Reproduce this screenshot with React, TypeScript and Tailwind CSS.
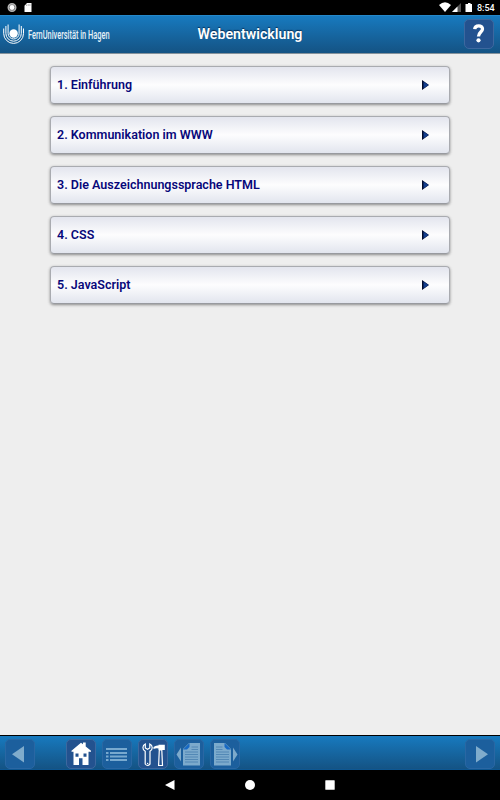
import React, { useState } from "react";

const CHAPTERS = [
  "Einführung",
  "Kommunikation im WWW",
  "Die Auszeichnungssprache HTML",
  "CSS",
  "JavaScript",
];

interface ToolButtonProps {
  label: string;
  disabled?: boolean;
  className?: string;
  onClick?: () => void;
  children: React.ReactNode;
}

const ToolButton: React.FC<ToolButtonProps> = ({ label, disabled = false, className = "", onClick, children }) => (
  <button
    aria-label={label}
    disabled={disabled}
    onClick={onClick}
    className={`h-[30px] w-[30px] shrink-0 rounded-[5px] border ${
      disabled ? "border-[#2a67a3] bg-[#1c5f9d]" : "border-[#3d689f] bg-[#23528f]"
    } ${className}`}
  >
    <svg viewBox="0 0 30 30" className="-m-px block h-[30px] w-[30px]">
      {children}
    </svg>
  </button>
);

function StatusBar() {
  return (
    <div className="flex h-[15px] items-center justify-between bg-black pr-[5px] pl-[7px]">
      <svg viewBox="0 0 30 15" className="h-[15px] w-[30px]">
        <circle cx="5" cy="7.5" r="3.8" fill="#777" stroke="#b5b5b5" strokeWidth="1.4" />
        <circle cx="5" cy="7.5" r="2.400" fill="#fff" />
        <path d="M20 3h4.500v9h-7V5.700z" fill="#fff" />
        <path d="M19.500 4.500v1.500M21.200 4v2M22.900 4v2" stroke="#999" strokeWidth=".7" />
      </svg>
      <div className="flex items-center">
        <svg viewBox="0 0 36 15" className="h-[15px] w-9">
          <path d="M0 5Q6-.5 12 5L6 12z" fill="#fff" />
          <path d="M22 3v9h-9z" fill="#555" />
          <path d="M18.500 6.500V12H13z" fill="#fff" />
          <path d="M26.500 4H29V3h2.500v1H33v8h-6.500z" fill="#fff" />
        </svg>
        <span className="ml-0.5 w-[18px] pt-px text-[9px] leading-[14px] font-medium whitespace-nowrap text-white">8:54</span>
      </div>
    </div>
  );
}

function Logo() {
  return (
    <div className="flex w-[112px] items-center pl-[3px]">
      <svg viewBox="0 0 21 21" className="h-[21px] w-[21px] shrink-0" fill="none" stroke="#fff">
        <circle cx="10.600" cy="9.500" r="4.200" fill="#fff" stroke="none" />
        <path d="M5.100 .5v9a5.500 5.500 0 0 0 11 0v-9" strokeWidth="1" />
        <path d="M2.900 2v7.500a7.700 7.700 0 0 0 15.400 0V2" strokeWidth="1" />
        <path d="M.7 4.500v5a9.900 9.900 0 0 0 19.800 0v-5" strokeWidth="1" />
      </svg>
      <span className="ml-[4px] origin-left scale-x-[0.617] text-[12px] leading-4 font-medium whitespace-nowrap text-[#e6f1f8]">
        FernUniversität in Hagen
      </span>
    </div>
  );
}

function Header() {
  return (
    <header className="flex h-[39px] items-center justify-between border-t border-b border-t-[#2588c9] border-b-[#85929b] bg-linear-to-b from-[#177abf] to-[#145384]">
      <Logo />
      <h1 className="pb-px text-[14.200px] leading-5 font-semibold text-white [text-shadow:0_-1px_1px_#062f57]">Webentwicklung</h1>
      <div className="-mt-px flex w-[112px] justify-end pr-[6px]">
        <ToolButton label="Hilfe">
          <path d="M10.700 10.200c.3-4.500 8-4.300 7.800-.2 0 3-4 3.300-4 7.500" fill="none" stroke="#fff" strokeWidth="3.300" />
          <circle cx="14.500" cy="21.300" r="2.100" fill="#fff" />
        </ToolButton>
      </div>
    </header>
  );
}

function DocumentIcon({ flip = false }: { flip?: boolean }) {
  return (
    <g transform={flip ? "translate(30 0) scale(-1 1)" : undefined}>
      <path d="M2.500 15.500 7 8.500v14z" fill="#7eaacb" />
      <path d="M15 4h11v22.500H9V10z" fill="#7caacc" />
      <path d="M9 10.500 15.500 4v4L13 10.500z" fill="#1769c4" />
      <path d="M17.500 8H24M17.500 10.500H24M11 13h13M11 15.500h13M11 18h13M11 20.500h13M11 23h13" stroke="#477fae" strokeWidth=".8" />
    </g>
  );
}

function Toolbar({ onHome }: { onHome: () => void }) {
  return (
    <footer className="flex h-[35px] items-start border-t border-b border-t-black border-b-[#0d5793] bg-linear-to-b from-[#177abf] to-[#145384] px-[5px] pt-[3px]">
      <ToolButton label="Zurück" disabled>
        <path d="M7 15.200 19 7v16.500z" fill="#80accc" />
      </ToolButton>
      <div className="ml-[30.500px] flex gap-[6px]">
        <ToolButton label="Startseite" onClick={onHome}>
          <path d="M5.500 11.700 15 3.700l2 1.500V3.500h2.700v4L25 11.700v1.100h-2.500V26h-15V12.800h-2z" fill="#fff" />
          <path d="M9.500 14.500h3v3.300h-3zM17.500 14.500h3v3.300h-3zM13 19.300h3.500V26H13z" fill="#23528f" />
        </ToolButton>
        <ToolButton label="Inhalt" disabled>
          <path d="M4 10h21M8 14h17M8 17.500h17M8 21h17M4 14h2.500M4 17.500h2.500M4 21h2.500" stroke="#78a9cf" strokeWidth="1.900" />
        </ToolButton>
        <ToolButton label="Einstellungen">
          <g transform="translate(-.7 0)">
            <path d="M8 5v4l2.200 1.300L12.500 9V5c3 1.200 3.300 5.700.2 7.200V25q-2.500 3-4.800 0V12.200C4.800 10.700 5 6.200 8 5z" fill="#23528f" stroke="#fff" strokeWidth="1.200" />
            <circle cx="10.300" cy="24.500" r=".7" fill="#fff" />
            <path d="M16.200 8q2.300-2 5-1.500v-.7h6.300V11h-6.300V9.500q-2.500-.5-5 .5z" fill="#fff" />
            <path d="M22 11h2.500l.7 15.500h-3.900z" fill="#23528f" stroke="#fff" strokeWidth="1.200" />
          </g>
        </ToolButton>
        <ToolButton label="Vorherige Seite" disabled>
          <DocumentIcon />
        </ToolButton>
        <ToolButton label="Nächste Seite" disabled>
          <DocumentIcon flip />
        </ToolButton>
      </div>
      <ToolButton label="Weiter" disabled className="ml-auto">
        <path d="M11 7v16.500l12-8.300z" fill="#80accc" />
      </ToolButton>
    </footer>
  );
}

export default function App() {
  const [chapter, setChapter] = useState<number | null>(null);

  return (
    <div className="flex h-screen flex-col bg-[#eee] font-[Roboto,sans-serif]">
      <StatusBar />
      <Header />
      <main className="flex flex-1 flex-col gap-3 px-[50px] pt-3">
        {CHAPTERS.map((title, i) => (
          <button
            key={title}
            onClick={() => setChapter(i)}
            aria-current={chapter === i}
            className="flex h-[38px] items-center justify-between rounded-[4px] border border-[#a9abb0] border-b-[#989a9f] bg-linear-to-b from-[#e3e5ee] via-[#fdfdfe] to-[#e2e5ee] pr-5 pl-[6px] shadow-[0_1px_3px_#888]"
          >
            <span className="text-[12.500px] leading-5 font-semibold text-[#08087a]">{i + 1}. {title}</span>
            <svg viewBox="0 0 7 10" className="h-[10px] w-[7px]">
              <path d="M0 0 7 5 0 10z" fill="#000b2c" />
              <path d="M1.500 1.500 6.500 5l-5 3.500z" fill="#123d8d" />
            </svg>
          </button>
        ))}
      </main>
      <Toolbar onHome={() => setChapter(null)} />
      {/* Android-Navigation */}
      <nav className="flex h-[30px] items-center justify-center gap-[70px] bg-black">
        <svg viewBox="0 0 10 10" className="h-[10px] w-[10px]" fill="#fff"><path d="M0 5 9.500 0v10z" /></svg>
        <svg viewBox="0 0 10 10" className="h-[10px] w-[10px]" fill="#fff"><circle cx="5" cy="5" r="5" /></svg>
        <svg viewBox="0 0 10 10" className="h-[10px] w-[10px]" fill="#fff"><rect x=".3" y=".3" width="9.400" height="9.400" rx=".5" /></svg>
      </nav>
    </div>
  );
}
